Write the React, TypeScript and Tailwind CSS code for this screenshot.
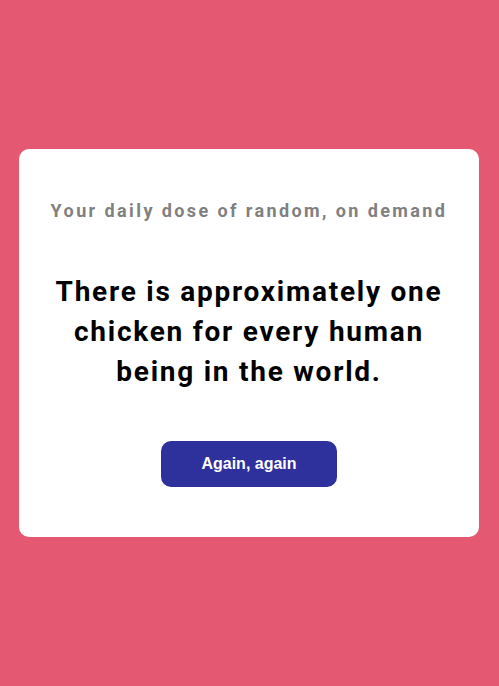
export default function App() {
  return (
    <div className="min-h-screen w-full bg-[#e45872] flex items-center justify-center pl-[19px] pr-[20px]">
      <div className="w-full bg-white rounded-[10px] px-6 pt-[48px] pb-[50px] flex flex-col items-center text-center">
        <p className="font-['Roboto',sans-serif] font-bold text-[18px] leading-[27px] tracking-[2.4px] text-[#808080]">
          Your daily dose of random, on demand
        </p>
        <h1 className="mt-[48px] font-['Roboto',sans-serif] font-bold text-[28px] leading-[40px] tracking-[1.75px] text-black">
          There is approximately one
          <br />
          chicken for every human
          <br />
          being in the world.
        </h1>
        <button className="mt-[49px] w-[176px] h-[46px] rounded-[10px] bg-[#2e309b] text-white font-['Liberation_Sans',Arial,sans-serif] font-bold text-[16px]">
          Again, again
        </button>
      </div>
    </div>
  );
}
